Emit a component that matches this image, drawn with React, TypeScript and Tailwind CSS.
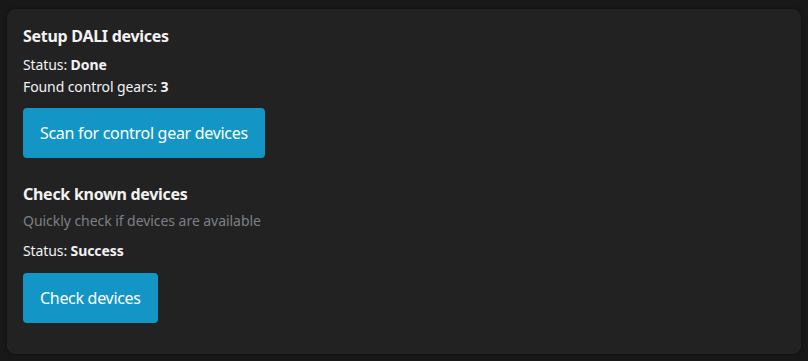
import React from "react";

export default function App() {
  return (
    <div
      className="w-[808px] h-[361px] bg-[#181818] pt-[9px] px-[7px] overflow-hidden"
      style={{ fontFamily: '"Noto Sans", "Open Sans", sans-serif' }}
    >
      <div className="h-[345px] w-[794px] rounded-[8px] bg-[#222222] px-4 pt-[15px] text-[#f2f2f2] shadow-[0_0_3px_rgba(0,0,0,0.5)]">
        <h2 className="text-[16px] font-bold leading-[24px] tracking-[-0.28px]">Setup DALI devices</h2>
        <p className="mt-[6px] text-[14px] leading-[22px] tracking-[-0.1px]">
          Status: <b>Done</b>
        </p>
        <p className="text-[14px] leading-[22px] tracking-[-0.1px]">
          Found control gears: <b>3</b>
        </p>
        <button className="mt-[10px] h-[50px] rounded-[4px] bg-[#1396c5] px-[17px] text-[16px] tracking-[-0.3px] text-white">
          Scan for control gear devices
        </button>
        <h2 className="mt-[24px] text-[16px] font-bold leading-[24px] tracking-[-0.28px]">Check known devices</h2>
        <p className="mt-[4px] text-[14px] leading-[22px] tracking-[-0.05px] text-[#7b8087]">
          Quickly check if devices are available
        </p>
        <p className="mt-[8px] text-[14px] leading-[22px] tracking-[-0.1px]">
          Status: <b>Success</b>
        </p>
        <button className="mt-[11px] h-[50px] rounded-[4px] bg-[#1396c5] px-[17px] text-[16px] tracking-[-0.3px] text-white">
          Check devices
        </button>
      </div>
    </div>
  );
}
